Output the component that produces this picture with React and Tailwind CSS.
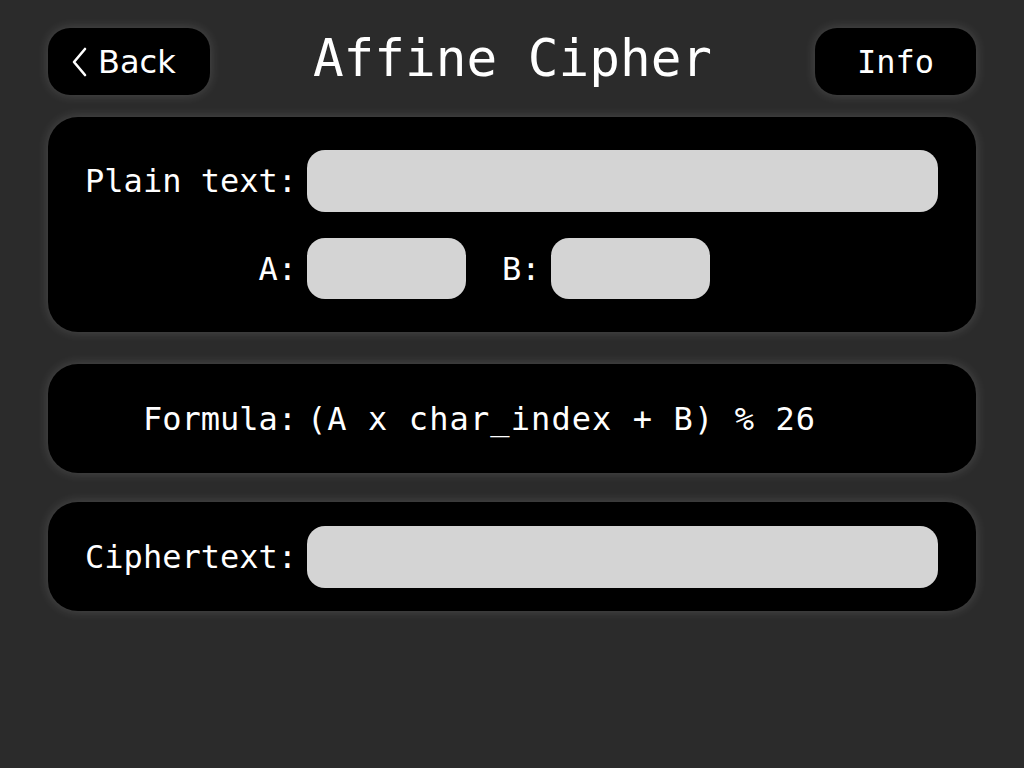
import React from "react";

const mono = { fontFamily: '"DejaVu Sans Mono", Menlo, monospace' };

function Card({ className = "", children }) {
  return (
    <div
      className={
        "mx-[48px] bg-black rounded-[30px] shadow-[0_0_12px_rgba(255,255,255,0.16)] " +
        className
      }
    >
      {children}
    </div>
  );
}

export default function App() {
  return (
    <div
      className="w-[1024px] h-[768px] bg-[#2b2b2b] text-white overflow-hidden pt-[28px]"
      style={mono}
    >
      {/* Header */}
      <div className="mx-[48px] flex items-center justify-between h-[67px]">
        <button
          className="w-[162px] h-[67px] bg-black rounded-[22px] shadow-[0_0_12px_rgba(255,255,255,0.16)] flex items-center pl-[22px] gap-[10px] text-white text-[32px]"
          style={{ fontFamily: '"DejaVu Sans", sans-serif' }}
        >
          <svg width="18" height="30" viewBox="0 0 18 30" fill="none">
            <path
              d="M15 2 L4 15 L15 28"
              stroke="white"
              strokeWidth="2.6"
              strokeLinecap="round"
              strokeLinejoin="round"
            />
          </svg>
          <span className="leading-none">Back</span>
        </button>
        <div className="text-[51px] leading-none pb-[6px]">Affine Cipher</div>
        <button className="w-[161px] h-[67px] bg-black rounded-[22px] shadow-[0_0_12px_rgba(255,255,255,0.16)] flex items-center justify-center text-white text-[32px]">
          Info
        </button>
      </div>

      {/* Card 1 */}
      <Card className="mt-[22px] pt-[33px] pb-[33px] pl-[37px] pr-[38px] flex flex-col gap-[26px]">
        <div className="flex items-center gap-[10px]">
          <div className="w-[212px] text-right text-[32px] leading-none whitespace-nowrap">
            Plain text:
          </div>
          <div className="flex-1 h-[62px] bg-[#d4d4d4] rounded-[18px]" />
        </div>
        <div className="flex items-center gap-[10px]">
          <div className="w-[212px] text-right text-[32px] leading-none">A:</div>
          <div className="w-[159px] h-[61px] bg-[#d4d4d4] rounded-[18px]" />
          <div className="ml-[26px] text-[32px] leading-none">B:</div>
          <div className="w-[159px] h-[61px] bg-[#d4d4d4] rounded-[18px]" />
        </div>
      </Card>

      {/* Card 2 */}
      <Card className="mt-[32px] h-[109px] pl-[37px] pr-[38px] flex items-center gap-[10px]">
        <div className="w-[212px] text-right text-[32px] leading-none">Formula:</div>
        <div className="text-[32px] leading-none whitespace-nowrap tracking-[1.1px]">
          (A x char_index + B) % 26
        </div>
      </Card>

      {/* Card 3 */}
      <Card className="mt-[29px] h-[109px] pl-[37px] pr-[38px] flex items-center gap-[10px]">
        <div className="w-[212px] text-right text-[32px] leading-none whitespace-nowrap">
          Ciphertext:
        </div>
        <div className="flex-1 h-[62px] bg-[#d4d4d4] rounded-[18px]" />
      </Card>
    </div>
  );
}
